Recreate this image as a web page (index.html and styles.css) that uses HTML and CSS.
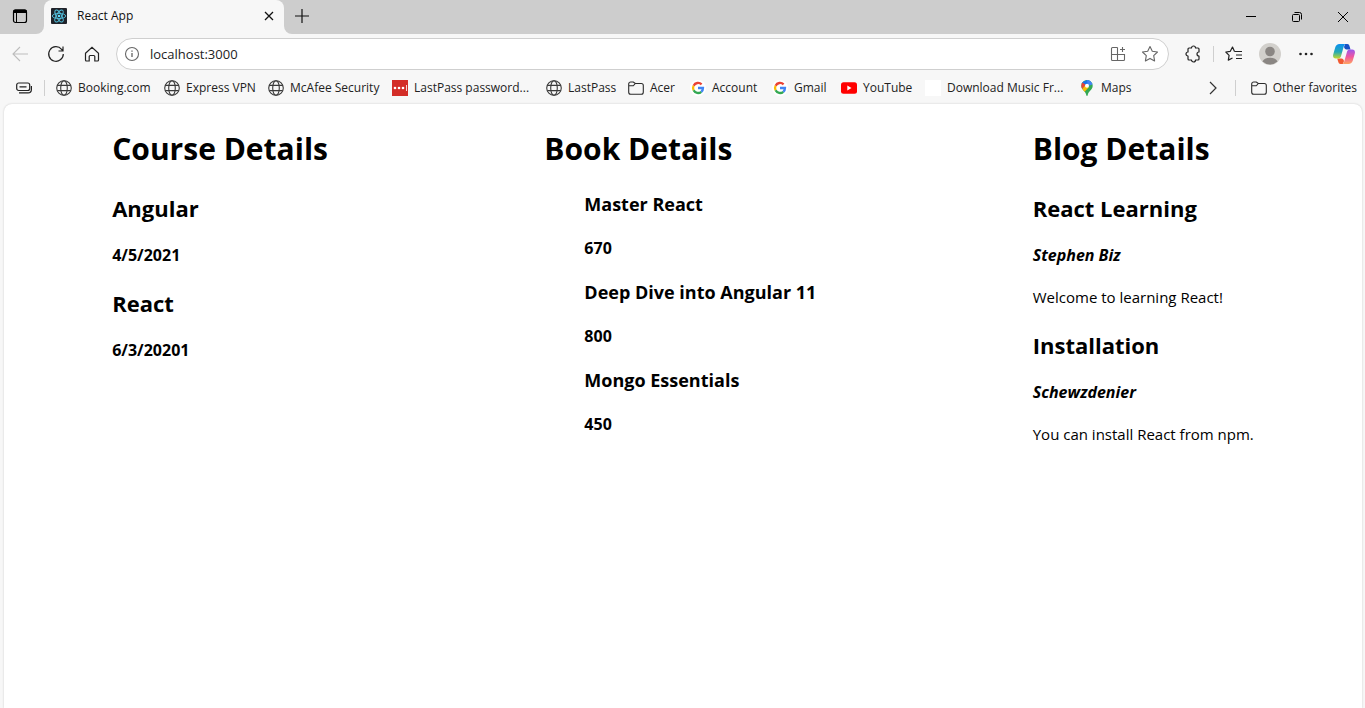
FILE: index.html
```html
<!DOCTYPE html>
<html lang="en">
<head>
<meta charset="utf-8">
<title>React App</title>
<link rel="stylesheet" href="styles.css">
</head>
<body>
<svg class="defs" aria-hidden="true">
  <defs>
    <symbol id="globe" viewBox="0 0 16 16"><g fill="none" stroke="#3b3b3b" stroke-width="1.1"><circle cx="8" cy="8" r="7.3"/><ellipse cx="8" cy="8" rx="3.3" ry="7.3"/><path d="M1.3 5.4h13.4M1.3 10.6h13.4"/></g></symbol>
    <symbol id="folder" viewBox="0 0 16 16"><path d="M.7 4a2 2 0 0 1 2-2h2.600l2 1.500h6a2 2 0 0 1 2 2v6.700a2 2 0 0 1-2 2H2.700a2 2 0 0 1-2-2zM.7 5.800h4.600l2-2.300" fill="none" stroke="#2b2b2b" stroke-width="1.1"/></symbol>
    <symbol id="google" viewBox="0 0 16 16"><circle cx="8" cy="8" r="8" fill="#fff"/><g fill="none" stroke-width="2.300"><path d="M11.600 4.400A5 5 0 0 0 3.600 5.700" stroke="#ea4335"/><path d="M3.600 5.700a5 5 0 0 0 0 4.600" stroke="#fbbc05"/><path d="M3.600 10.300a5 5 0 0 0 7.700 1.500" stroke="#34a853"/><path d="M11.300 11.800A5 5 0 0 0 13 8H8" stroke="#4285f4"/></g></symbol>
  </defs>
</svg>

<header class="browser">
  <div class="tabstrip">
    <button class="workspace" aria-label="Tab actions"><svg width="16" height="16" viewBox="0 0 16 16"><path d="M3 1.500h10a2 2 0 0 1 2 2V5H1V3.500a2 2 0 0 1 2-2z" fill="#000"/><rect x="1.500" y="2" width="13" height="12.500" rx="2" fill="none" stroke="#000" stroke-width="1.200"/><path d="M4.500 5v9" stroke="#000"/></svg></button>
    <div class="tab">
      <svg width="16" height="16" viewBox="0 0 16 16"><rect width="16" height="16" rx="1" fill="#20232a"/><g fill="none" stroke="#53c1de" stroke-width=".9"><ellipse cx="8" cy="8" rx="6.700" ry="2.600"/><ellipse cx="8" cy="8" rx="6.700" ry="2.600" transform="rotate(60 8 8)"/><ellipse cx="8" cy="8" rx="6.700" ry="2.600" transform="rotate(120 8 8)"/></g><circle cx="8" cy="8" r="1.300" fill="#61dafb"/></svg>
      <span class="tab-title">React App</span>
      <button class="tab-close" aria-label="Close tab"><svg width="10" height="10" viewBox="0 0 10 10"><path d="M1 1l8 8M9 1L1 9" stroke="#111" stroke-width="1.300"/></svg></button>
    </div>
    <button class="new-tab" aria-label="New tab"><svg width="14" height="14" viewBox="0 0 14 14"><path d="M7 0v14M0 7h14" stroke="#111" stroke-width="1.200"/></svg></button>
    <div class="window-controls">
      <button aria-label="Minimize"><svg width="10" height="10" viewBox="0 0 10 10"><path d="M0 4.500h10" stroke="#000"/></svg></button>
      <button aria-label="Restore"><svg width="10" height="10" viewBox="0 0 10 10"><g fill="none" stroke="#000"><rect x=".5" y="2.500" width="7" height="7" rx="1"/><path d="M2.500.5h5a2 2 0 0 1 2 2v5"/></g></svg></button>
      <button aria-label="Close window"><svg width="10" height="10" viewBox="0 0 10 10"><path d="M0 0l10 10M10 0L0 10" stroke="#000"/></svg></button>
    </div>
  </div>

  <div class="toolbar">
    <button class="tool" aria-label="Back"><svg width="16" height="16" viewBox="0 0 16 16"><path d="M8 1L1 8l7 7M1 8h15" fill="none" stroke="#bdbdbd" stroke-width="1.100"/></svg></button>
    <button class="tool" aria-label="Refresh"><svg width="18" height="18" viewBox="0 0 18 18"><path d="M16.300 9A7.300 7.300 0 1 1 14.600 4.300L16 6M16 1.500V6h-4.500" fill="none" stroke="#222" stroke-width="1.200"/></svg></button>
    <button class="tool" aria-label="Home"><svg width="16" height="16" viewBox="0 0 16 16"><path d="M1.500 7.200L8 1.200l6.500 6v6.800a1 1 0 0 1-1 1h-2.700v-4.500a1 1 0 0 0-1-1H6.200a1 1 0 0 0-1 1V15H2.500a1 1 0 0 1-1-1z" fill="none" stroke="#222" stroke-width="1.200"/></svg></button>
    <div class="address">
      <svg width="16" height="16" viewBox="0 0 16 16"><circle cx="8" cy="8" r="6.500" fill="none" stroke="#666" stroke-width="1.100"/><path d="M8 7v4M8 4.500v1.200" stroke="#555" stroke-width="1.200"/></svg>
      <input type="text" value="localhost:3000" aria-label="Address">
      <button aria-label="App available"><svg width="16" height="16" viewBox="0 0 16 16"><path d="M7.500 1.500h-5a1 1 0 0 0-1 1v11a1 1 0 0 0 1 1h11a1 1 0 0 0 1-1v-5h-13M7.500 1.500v13M12.500 1v5M10 3.500h5" fill="none" stroke="#666" stroke-width="1.100"/></svg></button>
      <button aria-label="Add to favorites"><svg width="18" height="18" viewBox="0 0 18 18"><path d="M9 1.500l2.300 4.800 5.200.7-3.800 3.700.9 5.200L9 13.400l-4.600 2.500.9-5.200L1.500 7l5.200-.7z" fill="none" stroke="#666" stroke-width="1.100" stroke-linejoin="round"/></svg></button>
    </div>
    <button class="tool tool-ext" aria-label="Extensions"><svg width="18" height="18" viewBox="0 0 18 18"><path d="M5 3h2.500a2 2 0 0 1 4 0H14a1 1 0 0 1 1 1v3a2 2 0 0 0 0 4v3a1 1 0 0 1-1 1h-2.500a2 2 0 0 1-4 0H5a1 1 0 0 1-1-1v-3a2 2 0 0 1 0-4V4a1 1 0 0 1 1-1z" fill="none" stroke="#222" stroke-width="1.200" stroke-linejoin="round"/></svg></button>
    <span class="rule"></span>
    <button class="tool tool-fav" aria-label="Favorites"><svg width="18" height="18" viewBox="0 0 18 18"><path d="M9.500 6.500H17M11 10h6M11 13.500h6M9.500 6.500L7.500 2 5.300 6.300.8 7l3.300 3.300-.8 4.800L7.500 13" fill="none" stroke="#222" stroke-width="1.200" stroke-linejoin="round"/></svg></button>
    <button class="tool" aria-label="Profile"><svg width="22" height="22" viewBox="0 0 22 22"><circle cx="11" cy="11" r="11" fill="#d2d0cc"/><circle cx="11" cy="8.500" r="4.800" fill="#8a8683"/><path d="M3.500 18.500a7.700 5 0 0 1 15 0 11 11 0 0 1-15 0z" fill="#8a8683"/></svg></button>
    <button class="tool" aria-label="Settings and more"><svg width="16" height="16" viewBox="0 0 16 16"><g fill="#222"><circle cx="2.500" cy="8" r="1.300"/><circle cx="8" cy="8" r="1.300"/><circle cx="13.500" cy="8" r="1.300"/></g></svg></button>
    <button class="tool tool-copilot" aria-label="Copilot"><svg width="22" height="20" viewBox="0 0 22 20">
      <defs>
        <linearGradient id="cool" x1="0" y1="0" x2="0" y2="1"><stop offset="0" stop-color="#0a8ff0"/><stop offset=".55" stop-color="#25a9b5"/><stop offset="1" stop-color="#c5d829"/></linearGradient>
        <linearGradient id="warm" x1="0" y1="0" x2="0" y2="1"><stop offset="0" stop-color="#9b57ee"/><stop offset=".5" stop-color="#f0569f"/><stop offset="1" stop-color="#ffa560"/></linearGradient>
      </defs>
      <path d="M12 0h2.300c1.500 0 2 1.200 2.500 3l.7 2.500h-4c-1.500 0-2-1-2.500-2.500z" fill="#1750c5"/>
      <path d="M10 20H7.500c-1.500 0-2-1.200-2.500-3l-.8-2.500h4.300c1.500 0 2 1 2.500 2.500z" fill="#f15a32"/>
      <path d="M6.500 0H13c-1.500 0-2 1.500-2.400 3L8.200 11.500c-.6 2.200-1.400 3-3 3H2.800C.5 14.500-.3 13 .2 10.500l2-7C2.900 1.200 4.300 0 6.500 0z" fill="url(#cool)"/>
      <path d="M15.500 20H9c1.500 0 2-1.500 2.400-3l2.400-8.500c.6-2.200 1.400-3 3-3h2.400c2.300 0 3.100 1.500 2.600 4l-2 7c-.7 2.300-2.100 3.500-4.300 3.500z" fill="url(#warm)"/>
    </svg></button>
  </div>

  <nav class="bookmarks" aria-label="Favorites bar">
    <button class="lead" aria-label="Saved pages"><svg width="16" height="14" viewBox="0 0 16 14"><g fill="none" stroke="#222" stroke-width="1.200"><rect x=".7" y="2" width="13" height="7.500" rx="2"/><path d="M3 11.800h9a3.400 3.400 0 0 0 3.400-3.400V5M3.500 5.800h7"/></g></svg></button>
    <span class="rule"></span>
    <div class="links">
      <a href="#"><svg><use href="#globe"/></svg><span>Booking.com</span></a>
      <a href="#"><svg><use href="#globe"/></svg><span>Express VPN</span></a>
      <a href="#"><svg><use href="#globe"/></svg><span>McAfee Security</span></a>
      <a href="#"><svg viewBox="0 0 16 16"><rect width="16" height="16" fill="#d32d27"/><g fill="#fff"><circle cx="3" cy="8" r="1.300"/><circle cx="7" cy="8" r="1.300"/><circle cx="11" cy="8" r="1.300"/><path d="M14 5h.8v6H14z"/></g></svg><span>LastPass password...</span></a>
      <a href="#"><svg><use href="#globe"/></svg><span>LastPass</span></a>
      <a href="#"><svg><use href="#folder"/></svg><span>Acer</span></a>
      <a href="#"><svg><use href="#google"/></svg><span>Account</span></a>
      <a href="#"><svg><use href="#google"/></svg><span>Gmail</span></a>
      <a href="#"><svg viewBox="0 0 16 16"><rect y="2.300" width="16" height="11.400" rx="2.500" fill="#f00"/><path d="M6.300 5.600v4.800L10.500 8z" fill="#fff"/></svg><span>YouTube</span></a>
      <a href="#"><svg viewBox="0 0 16 16"><rect width="16" height="16" fill="#fff"/></svg><span>Download Music Fr...</span></a>
      <a href="#"><svg viewBox="0 0 16 16"><clipPath id="pin"><path d="M8 0a5.700 5.700 0 0 1 5.700 5.700C13.700 10 9.300 11 8.700 15.200c-.1 1-1.300 1-1.400 0C6.700 11 2.300 10 2.300 5.700A5.700 5.700 0 0 1 8 0z"/></clipPath><g clip-path="url(#pin)"><path d="M0 0h16v16H0z" fill="#34a853"/><path d="M0 3l8 3 4.500-5.500L8 0z" fill="#1a73e8"/><path d="M8 0h8v3.500L9 6z" fill="#4285f4"/><path d="M0 2.500h3.500L7 5 2 10H0z" fill="#ea4335"/><path d="M2 10.500L7 4.500l3 2.500-5.500 6z" fill="#fbbc04"/></g><circle cx="8" cy="5.700" r="2" fill="#fff"/></svg><span>Maps</span></a>
    </div>
    <button class="more" aria-label="More favorites"><svg width="8" height="14" viewBox="0 0 8 14"><path d="M1 1l6 6-6 6" fill="none" stroke="#333" stroke-width="1.200"/></svg></button>
    <span class="rule"></span>
    <a class="other" href="#"><svg><use href="#folder"/></svg><span>Other favorites</span></a>
  </nav>
</header>

<main class="page">
  <section>
    <h1>Course Details</h1>
    <h2>Angular</h2>
    <h4>4/5/2021</h4>
    <h2>React</h2>
    <h4>6/3/20201</h4>
  </section>
  <section>
    <h1>Book Details</h1>
    <div class="books">
      <h3>Master React</h3>
      <h4>670</h4>
      <h3>Deep Dive into Angular 11</h3>
      <h4>800</h4>
      <h3>Mongo Essentials</h3>
      <h4>450</h4>
    </div>
  </section>
  <section>
    <h1>Blog Details</h1>
    <h2>React Learning</h2>
    <h4 class="author">Stephen Biz</h4>
    <p>Welcome to learning React!</p>
    <h2>Installation</h2>
    <h4 class="author">Schewzdenier</h4>
    <p>You can install React from npm.</p>
  </section>
</main>
</body>
</html>
```

FILE: styles.css
```css
* { box-sizing: border-box; }

body {
  margin: 0;
  min-height: 100vh;
  display: flex;
  flex-direction: column;
  background: #f7f7f7;
  color: #000;
  font-family: "Segoe UI", "Open Sans", sans-serif;
}

button {
  display: flex;
  align-items: center;
  justify-content: center;
  flex: none;
  padding: 0;
  border: 0;
  background: none;
}

svg { display: block; flex: none; }
.defs { position: absolute; width: 0; height: 0; }

.rule { flex: none; width: 1px; height: 16px; background: #cfcfcf; }

/* Tab strip */
.tabstrip { display: flex; height: 34px; background: #f7f7f7; }
.workspace { width: 44px; height: 34px; padding-right: 4px; padding-bottom: 2px; background: #cdcdcd; border-bottom-right-radius: 8px; }
.tab {
  display: flex;
  align-items: center;
  width: 240px;
  padding: 0 10px 2px 7px;
  background: #f7f7f7;
  box-shadow: 0 -8px 0 8px #cdcdcd;
  clip-path: inset(0);
  border-radius: 8px 8px 0 0;
}
.tab-title { flex: 1; margin-left: 10px; font-size: 12px; line-height: 16px; color: #111; }
.new-tab { width: 36px; height: 34px; padding-bottom: 2px; background: #cdcdcd; border-bottom-left-radius: 8px; }
.window-controls { flex: 1; display: flex; justify-content: flex-end; background: #cdcdcd; }
.window-controls button { width: 46px; height: 34px; padding-left: 2px; }

/* Toolbar */
.toolbar { display: flex; align-items: center; height: 40px; padding: 0 3px 0 2px; }
.tool { width: 36px; height: 32px; }
.address {
  flex: 1;
  display: flex;
  align-items: center;
  height: 32px;
  margin-left: 6px;
  padding: 0 9px 0 7px;
  border: 1px solid #cfcfcf;
  border-radius: 16px;
  background: #fff;
}
.address input {
  flex: 1;
  min-width: 0;
  margin-left: 10px;
  padding: 0;
  border: 0;
  outline: 0;
  background: none;
  font: 13px/20px "Segoe UI", "Open Sans", sans-serif;
  color: #222;
}
.address button { width: 18px; height: 30px; margin-left: 14px; }
.tool-ext { margin-left: 6px; margin-right: 2px; }
.tool-fav { margin-left: 2px; }
.tool-copilot { margin-left: 2px; }

/* Favorites bar */
.bookmarks { display: flex; align-items: center; height: 30px; padding-bottom: 2px; font-size: 12px; line-height: 16px; }
.bookmarks a { display: flex; align-items: center; gap: 6px; color: #222; text-decoration: none; white-space: nowrap; }
.bookmarks a svg { width: 16px; height: 16px; }
.lead { width: 44px; padding-left: 4px; }
.links {
  flex: 1;
  display: grid;
  grid-template-columns: 108px 104px 124px 154px 82px 62px 82px 69px 84px 154px auto;
  margin-left: 11px;
}
.more { width: 44px; }
.other { margin: 0 8px 0 15px; }

/* Page content */
.page {
  flex: 1;
  display: flex;
  justify-content: space-around;
  align-items: flex-start;
  margin: 0 3px 0 4px;
  padding-top: 23px;
  border-radius: 8px 8px 0 0;
  background: #fff;
  box-shadow: 0 0 2px #c4c4c4;
}
h1, h2, h3, h4, p { margin: 0 0 21px; font-size: 16px; line-height: 21px; }
h1 { margin-bottom: 22px; font-size: 30px; line-height: 43px; }
h2 { font-size: 22px; line-height: 32px; }
h3 { font-size: 18px; line-height: 25px; }
p { font-size: 15px; }
.author { font-style: italic; }
.books { padding-left: 40px; }
```
